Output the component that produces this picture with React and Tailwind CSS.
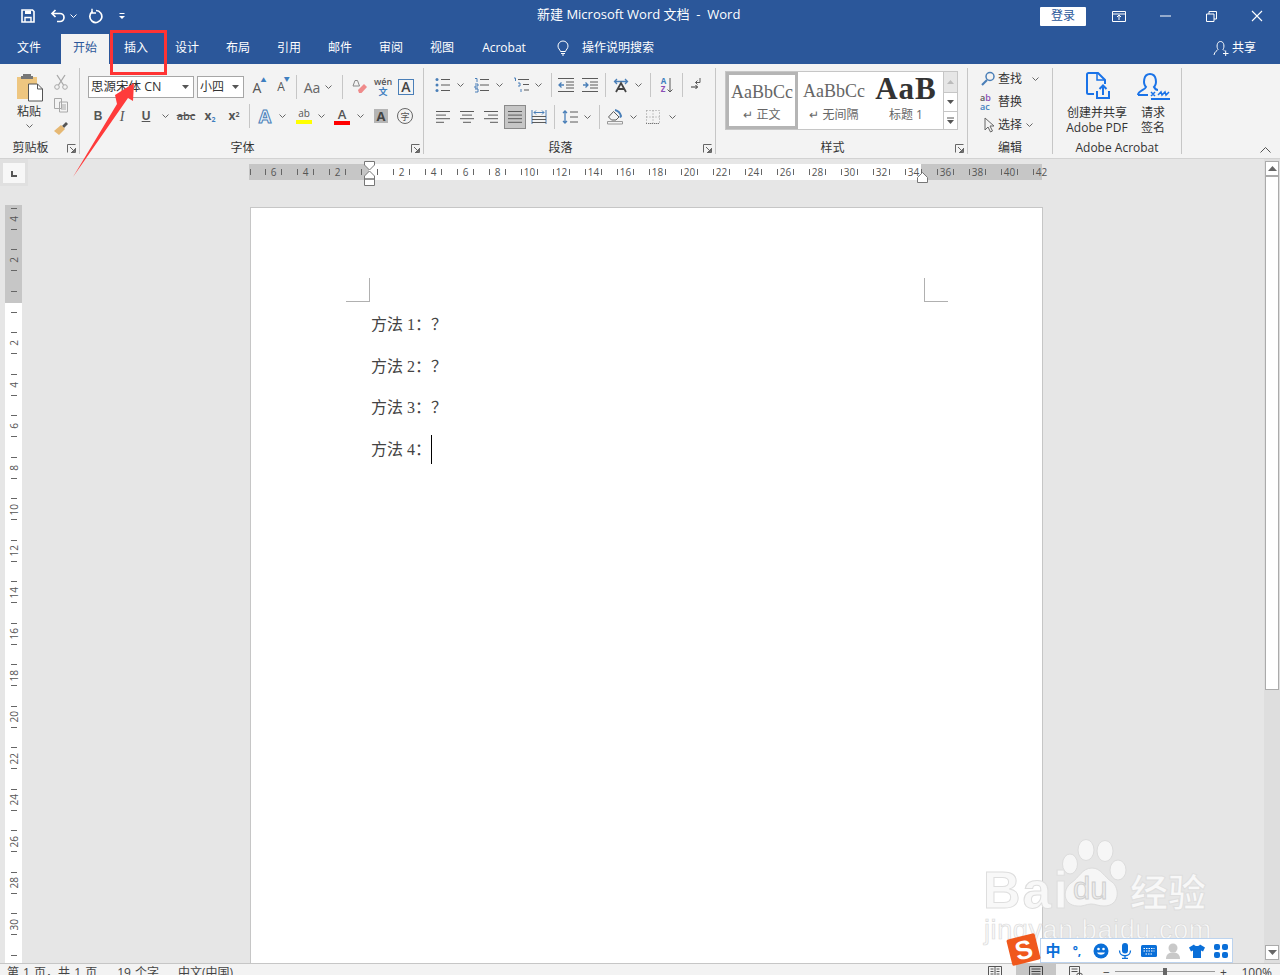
import React from "react";

const S = ({ w = 16, h = 16, className = "", children }) => (
  <svg width={w} height={h} viewBox={`0 0 ${w} ${h}`} fill="none" className={className}>{children}</svg>
);
const G = "#5b5b5b";
const B = "#4a7fb8";
const Chev = ({ c = "#666" }) => <S w={7} h={4}><path d="M.5.5 3.5 3.5 6.5.5" stroke={c} /></S>;
const Cell = ({ className = "w-[24px]", children }) => (
  <span className={`flex h-full shrink-0 items-center justify-center ${className}`}>{children}</span>
);
const Sep = ({ className = "" }) => <span className={`h-[24px] w-px shrink-0 self-center bg-[#c6c6c6] ${className}`} />;
const Launcher = () => (
  <span className="absolute bottom-[1px] right-[3px]">
    <S w={9} h={9}><path d="M.5 8.5v-8h8M8.5 4v4.5H4M3 3l4.5 4.5M7.5 5v2.5H5" stroke="#666" /></S>
  </span>
);
const Group = ({ className, label, launcher, children }) => (
  <div className={`relative mt-[4px] flex h-[86px] shrink-0 flex-col border-r border-[#c6c6c6] ${className}`}>
    <div className="h-[71px]">{children}</div>
    <div className={`flex h-[15px] items-center justify-center pt-[2px] text-[12px] leading-none text-[#333] ${launcher ? "pr-[18px]" : ""}`}>{label}</div>
    {launcher && <Launcher />}
  </div>
);
const Lines = ({ rows }) => (
  <S w={16} h={14}>{rows.map(([x1, x2], i) => <path key={i} d={`M${x1} ${1.5 + i * 3.6}H${x2}`} stroke={G} />)}</S>
);

const tabs = [
  ["文件", "ml-[5px] mr-[8px] w-[48px] text-white"],
  ["开始", "mr-[3px] w-[48px] bg-[#f3f3f3] text-[#2b579a]"],
  ["插入", "mr-[3px] w-[48px] text-white"],
  ["设计", "mr-[3px] w-[48px] text-white"],
  ["布局", "mr-[3px] w-[48px] text-white"],
  ["引用", "mr-[3px] w-[48px] text-white"],
  ["邮件", "mr-[3px] w-[48px] text-white"],
  ["审阅", "mr-[3px] w-[48px] text-white"],
  ["视图", "mr-[3px] w-[48px] text-white"],
  ["Acrobat", "w-[70px] text-white"],
];

const hCells = Array.from({ length: 25 }, (_, k) => (k === 3 ? "" : k < 3 ? String(6 - 2 * k) : String(2 * (k - 3))));
const vCells = Array.from({ length: 19 }, (_, k) => (k === 2 || k === 18 ? "" : k < 2 ? String(4 - 2 * k) : String(2 * (k - 2))));
const lines = ["方法 1：？", "方法 2：？", "方法 3：？"];

function TitleBar() {
  return (
    <div className="relative flex h-[32px] shrink-0 items-center bg-[#2b579a] text-white">
      <Cell className="ml-[20px] w-[16px]">
        <S><path d="M2 2h10.5L14 3.5V14H2z" stroke="#fff" strokeWidth="1.6" /><path d="M5 2.5h6v3.5H5z" fill="#fff" /><path d="M5 14V9.5h6V14" stroke="#fff" strokeWidth="1.4" /></S>
      </Cell>
      <Cell className="ml-[14px] w-[16px]">
        <S><path d="M5.5 2 2 5.5 5.5 9M2.5 5.5H10a3.7 3.7 0 0 1 0 8H7" stroke="#fff" strokeWidth="1.7" /></S>
      </Cell>
      <Cell className="ml-[3px] w-[8px]"><Chev c="#fff" /></Cell>
      <Cell className="ml-[10px] w-[16px]">
        <S><path d="M5.5 3.5a6 6 0 1 0 3.5-1" stroke="#fff" strokeWidth="1.7" /><path d="M5 .8V5h4" stroke="#fff" strokeWidth="1.4" /></S>
      </Cell>
      <Cell className="ml-[15px] w-[8px]">
        <S w={8} h={8}><path d="M1.5 1.5h5" stroke="#fff" /><path d="M1 4h6L4 7z" fill="#fff" /></S>
      </Cell>
      <div className="absolute left-[537px] top-[5px] whitespace-pre text-[13px] leading-[18px]">新建 Microsoft Word 文档  -  Word</div>
      <div className="ml-auto flex h-full items-center">
        <div className="flex h-[19px] w-[46px] items-center justify-center rounded-[1px] bg-white text-[12px] text-[#2b579a]">登录</div>
        <Cell className="ml-[19px] w-[28px]">
          <S w={14} h={11}><path d="M.5.5h13v10H.5zM.5 3h13M7 9V4.5M5 6l2-2 2 2" stroke="#fff" /></S>
        </Cell>
        <Cell className="ml-[18px] w-[28px]"><S w={11} h={2}><path d="M0 1h11" stroke="#fff" /></S></Cell>
        <Cell className="ml-[18px] w-[28px]">
          <S w={11} h={11}><path d="M.5 3h7.5v7.5H.5zM3 3V.5h7.5V8H8" stroke="#fff" /></S>
        </Cell>
        <Cell className="ml-[18px] mr-[9px] w-[28px]">
          <S w={12} h={12}><path d="m1 1 10 10M11 1 1 11" stroke="#fff" strokeWidth="1.1" /></S>
        </Cell>
      </div>
    </div>
  );
}

function TabRow() {
  return (
    <div className="flex h-[32px] shrink-0 items-end bg-[#2b579a] text-[12px]">
      {tabs.map(([t, c]) => (
        <div key={t} className={`flex h-[30px] shrink-0 items-center justify-center pb-[2px] ${c}`}>{t}</div>
      ))}
      <span className="ml-[17px] flex h-[30px] w-[14px] items-center justify-center pb-[2px]">
        <S w={14} h={16}><path d="M4.500 11.500C4 9.500 2 8.700 2 6a5 5 0 0 1 10 0c0 2.700-2 3.500-2.500 5.500zM5 13.500h4M6 15h2" stroke="#fff" /></S>
      </span>
      <span className="ml-[12px] flex h-[30px] items-center pb-[2px] text-white">操作说明搜索</span>
      <span className="ml-auto mr-[24px] flex h-[30px] items-center gap-[3px] pb-[2px] text-white">
        <S><path d="M1 15c.5-3.500 3-4 4-5.500C3.500 7.500 3.500 1.500 7.500 1.500s4 6 2.500 8c.5.700 1 1 1.500 1.300M10 13.500h5.500M12.700 10.500v5.500" stroke="#fff" /></S>
        共享
      </span>
    </div>
  );
}

function Ribbon() {
  return (
    <div className="flex h-[95px] shrink-0 border-b border-[#d2d2d2] bg-[#f3f3f3] text-[#333]">
      <Group className="w-[80px]" label="剪贴板" launcher>
        <div className="flex h-full">
          <div className="ml-[11px] flex w-[36px] flex-col items-center pt-[4px]">
            <S w={30} h={30}>
              <path d="M3 5h20v22H3z" fill="#eec680" /><path d="M9 2h8v5H9z" fill="#777" /><path d="M7 4h12v3H7z" fill="#777" />
              <path d="M14.500 12h9l5 5v12h-14z" fill="#fff" stroke="#555" /><path d="M23.500 12v5h5" stroke="#555" />
            </S>
            <span className="mt-[1px] text-[12px] leading-[18px]">粘贴</span>
            <span className="mt-[3px] leading-none"><Chev /></span>
          </div>
          <div className="ml-[4px] flex w-[20px] flex-col items-center pt-[2px]">
            <Cell className="!h-[23px] w-[20px]">
              <S><path d="m4 1 6.500 10M12 1 5.500 11" stroke="#a8a8a8" strokeWidth="1.300" /><circle cx="4" cy="13" r="2.300" stroke="#a8a8a8" /><circle cx="12" cy="13" r="2.300" stroke="#a8a8a8" /></S>
            </Cell>
            <Cell className="!h-[23px] w-[20px]">
              <S><path d="M1.500 1.500h7v10h-7zM6.500 5h8v10h-8zM8 8h5M8 10h5M8 12h5" stroke="#a8a8a8" /></S>
            </Cell>
            <Cell className="!h-[23px] w-[20px]">
              <S><path d="m9 6 4-4 2 2-4 4z" fill="#555" /><path d="m1 11 7-6 4 4-6 6z" fill="#e6b873" /></S>
            </Cell>
          </div>
        </div>
      </Group>

      <Group className="w-[344px]" label="字体" launcher>
        <div className="mt-[8px] flex h-[22px] items-center pl-[8px]">
          <div className="flex h-[22px] w-[106px] items-center justify-between border border-[#a6a6a6] bg-white pl-[2px] pr-[4px] text-[12.5px] leading-none">
            <span className="text-[#333]">思源宋体 CN</span>
            <S w={7} h={4}><path d="M0 0h7L3.500 4z" fill="#555" /></S>
          </div>
          <div className="ml-[3px] flex h-[22px] w-[47px] items-center justify-between border border-[#a6a6a6] bg-white pl-[2px] pr-[4px] text-[12px] leading-none">
            <span>小四</span>
            <S w={7} h={4}><path d="M0 0h7L3.500 4z" fill="#555" /></S>
          </div>
          <Cell className="ml-[1px] w-[24px]"><span className="relative text-[14px] text-[#555]">A<span className="absolute -right-[5px] -top-[1px] text-[6px] text-[#3f7fc0]">▲</span></span></Cell>
          <Cell className="w-[24px]"><span className="relative text-[12px] text-[#555]">A<span className="absolute -right-[5px] -top-[3px] text-[6px] text-[#3f7fc0]">▼</span></span></Cell>
          <Sep className="ml-[3px]" />
          <Cell className="ml-[4px] w-[22px]"><span className="text-[14px] text-[#666]">Aa</span></Cell>
          <Cell className="w-[10px]"><Chev /></Cell>
          <Sep className="ml-[9px]" />
          <Cell className="ml-[5px] w-[24px]">
            <S><path d="M3 1.500h2.500L7.500 7H1z" stroke="#888" /><path d="m6 11 6-6 3 3-5.500 6H7z" fill="#ef8a8a" /></S>
          </Cell>
          <Cell className="w-[22px]"><span className="flex flex-col items-center text-[9px] font-semibold leading-[10px] text-[#555]">wén<span className="text-[#3f7fc0]">文</span></span></Cell>
          <Cell className="w-[24px]"><span className="flex h-[16px] w-[16px] items-center justify-center border border-[#4a7fb8] text-[14px] font-semibold leading-none text-[#444]">A</span></Cell>
        </div>
        <div className="mt-[6px] flex h-[24px] items-center pl-[6px] text-[#555]">
          <Cell className="w-[24px]"><b className="font-['Liberation_Sans'] text-[12px]">B</b></Cell>
          <Cell className="w-[24px]"><i className="font-['Liberation_Serif'] text-[14px]">I</i></Cell>
          <Cell className="w-[24px]"><b className="font-['Liberation_Sans'] text-[12px] underline">U</b></Cell>
          <Cell className="w-[14px]"><Chev /></Cell>
          <Cell className="ml-[2px] w-[24px]"><span className="text-[11px] font-semibold line-through">abc</span></Cell>
          <Cell className="w-[24px]"><b className="text-[12px]">x<sub className="text-[7px] text-[#3f7fc0]">2</sub></b></Cell>
          <Cell className="w-[24px]"><b className="text-[12px]">x<sup className="text-[7px]">2</sup></b></Cell>
          <Sep className="ml-[3px]" />
          <Cell className="ml-[3px] w-[24px]"><span className="text-[18px] font-bold leading-none text-[#e8f1fa] [-webkit-text-stroke:1px_#4a7fb8]">A</span></Cell>
          <Cell className="w-[10px]"><Chev /></Cell>
          <Cell className="ml-[5px] w-[24px]">
            <span className="flex flex-col items-center"><span className="text-[10px] leading-[11px] text-[#555]">ab</span><span className="mt-[1px] h-[4px] w-[16px] bg-[#ffff00]" /></span>
          </Cell>
          <Cell className="w-[10px]"><Chev /></Cell>
          <Cell className="ml-[4px] w-[24px]">
            <span className="flex flex-col items-center"><span className="text-[13px] font-semibold leading-[12px]">A</span><span className="mt-[1px] h-[4px] w-[16px] bg-[#ff0000]" /></span>
          </Cell>
          <Cell className="ml-[1px] w-[10px]"><Chev /></Cell>
          <Cell className="ml-[4px] w-[24px]"><span className="flex h-[14px] w-[14px] items-center justify-center bg-[#b5b5b5] text-[13px] font-bold leading-none text-[#444]">A</span></Cell>
          <Cell className="w-[24px]"><span className="flex h-[16px] w-[16px] items-center justify-center rounded-full border border-[#666] text-[9px] leading-none">字</span></Cell>
        </div>
      </Group>

      <Group className="w-[292px]" label="段落" launcher>
        <div className="mt-[5px] flex h-[24px] items-center">
          <Cell className="ml-[7px] w-[24px]">
            <S><circle cx="2" cy="2.500" r="1.500" fill={B} /><circle cx="2" cy="8" r="1.500" fill={B} /><circle cx="2" cy="13.500" r="1.500" fill={B} /><path d="M6 2.500h9M6 8h9M6 13.500h9" stroke={G} /></S>
          </Cell>
          <Cell className="w-[10px]"><Chev /></Cell>
          <Cell className="ml-[5px] w-[24px]">
            <S><path d="M1 1.500h2V5M1 7h3v2H1v2h3M1 12h3v3H1" stroke={B} /><path d="M6 2.500h9M6 8h9M6 13.500h9" stroke={G} /></S>
          </Cell>
          <Cell className="w-[10px]"><Chev /></Cell>
          <Cell className="ml-[5px] w-[24px]">
            <S><path d="M1 1h1.500v3M5 6h2v3H5M8 12v3" stroke={B} /><path d="M5 2.500h11M10 7.500h6M11 13h5" stroke={G} /></S>
          </Cell>
          <Cell className="w-[10px]"><Chev /></Cell>
          <Sep className="ml-[8px]" />
          <Cell className="ml-[2px] w-[24px]">
            <S><path d="M0 1.500h16M8 5h8M8 8h8M8 11h8M0 14.500h16" stroke={G} /><path d="M6 8H1M3.500 5.500 1 8l2.500 2.500" stroke={B} strokeWidth="1.300" /></S>
          </Cell>
          <Cell className="w-[24px]">
            <S><path d="M0 1.500h16M8 5h8M8 8h8M8 11h8M0 14.500h16" stroke={G} /><path d="M1 8h5M3.500 5.500 6 8l-2.500 2.500" stroke={B} strokeWidth="1.300" /></S>
          </Cell>
          <Sep className="ml-[3px]" />
          <Cell className="ml-[3px] w-[24px]">
            <S><path d="M2 4.500h12M4 2 1.500 4.500 4 7M12 2l2.500 2.500L12 7" stroke={B} strokeWidth="1.300" /><path d="m3 15 5-9 5 9M5 12h6" stroke="#444" strokeWidth="1.800" /></S>
          </Cell>
          <Cell className="w-[10px]"><Chev /></Cell>
          <Sep className="ml-[7px]" />
          <Cell className="ml-[4px] w-[24px]">
            <span className="flex items-center gap-[1px]"><span className="flex flex-col text-[8px] font-bold leading-[8px]"><span className="text-[#3f7fc0]">A</span><span className="text-[#8a4fb5]">Z</span></span>
            <S w={6} h={15}><path d="M3 0v14M.5 11.500 3 14l2.500-2.500" stroke={G} /></S></span>
          </Cell>
          <Sep className="ml-[3px]" />
          <Cell className="ml-[2px] w-[24px]">
            <S><path d="M11 1v4.500H6.500M8.500 3.500l-2 2 2 2" stroke={G} /><path d="M2 10h6.500M6.500 8l2 2-2 2" stroke="#333" /></S>
          </Cell>
        </div>
        <div className="mt-[8px] flex h-[24px] items-center">
          <Cell className="ml-[7px] w-[24px]"><Lines rows={[[1, 15], [1, 11], [1, 15], [1, 9]]} /></Cell>
          <Cell className="w-[24px]"><Lines rows={[[1, 15], [3, 13], [1, 15], [4, 12]]} /></Cell>
          <Cell className="w-[24px]"><Lines rows={[[1, 15], [5, 15], [1, 15], [7, 15]]} /></Cell>
          <Cell className="ml-[1px] w-[22px] border border-[#8a8a8a] bg-[#c6c6c6]"><Lines rows={[[1, 15], [1, 15], [1, 15], [1, 15]]} /></Cell>
          <Cell className="ml-[1px] w-[24px]">
            <S><path d="M1 1v14M15 1v14M3 3.500h10M5 1.500l-2 2 2 2M11 1.500l2 2-2 2" stroke={B} /><path d="M1 7.500h14M1 10.500h14M1 13.500h14" stroke={G} /></S>
          </Cell>
          <Sep className="ml-[3px]" />
          <Cell className="ml-[3px] w-[24px]">
            <S><path d="M3 2v12M1 4l2-2 2 2M1 12l2 2 2-2" stroke={B} strokeWidth="1.300" /><path d="M8 3h8M8 8h8M8 13h8" stroke={G} /></S>
          </Cell>
          <Cell className="w-[10px]"><Chev /></Cell>
          <Sep className="ml-[7px]" />
          <Cell className="ml-[3px] w-[24px]">
            <S><path d="m1.500 8 5-5.500L12 8 9 11H4.500z" stroke={G} /><path d="M8 1c2 .5 5 2.500 6 6l-1 1.500" stroke={B} strokeWidth="2" /><path d="M.5 12.500h15v2.500H.5z" stroke="#999" /></S>
          </Cell>
          <Cell className="ml-[1px] w-[10px]"><Chev /></Cell>
          <Cell className="ml-[3px] w-[24px]">
            <S><path d="M1.500 1.500h13v13h-13zM8 1.500v13M1.500 8h13" stroke="#999" strokeDasharray="1 2" /><path d="M1 14.500h14" stroke="#777" strokeDasharray="1 1" /></S>
          </Cell>
          <Cell className="ml-[2px] w-[10px]"><Chev /></Cell>
        </div>
      </Group>

      <Group className="w-[252px]" label="样式" launcher>
        <div className="ml-[9px] mt-[3px] flex h-[59px] w-[233px] border border-[#c6c6c6] bg-white">
          <div className="flex w-[72px] flex-col items-center overflow-hidden border-[3px] border-[#b5b5b5] pt-[5px]">
            <span className="font-['Liberation_Serif'] whitespace-nowrap text-[18px] leading-[24px] text-[#666]">AaBbCc</span>
            <span className="mt-[2px] text-[12px] leading-[18px] text-[#666]">↵ 正文</span>
          </div>
          <div className="flex w-[72px] flex-col items-center overflow-hidden pt-[7px]">
            <span className="font-['Liberation_Serif'] whitespace-nowrap text-[18px] leading-[24px] text-[#666]">AaBbCc</span>
            <span className="mt-[3px] whitespace-nowrap text-[12px] leading-[18px] text-[#666]">↵ 无间隔</span>
          </div>
          <div className="flex w-[72px] flex-col items-center overflow-hidden pt-[1px]">
            <span className="font-['Liberation_Serif'] whitespace-nowrap text-[31px] font-bold leading-[31px] tracking-[1px] text-[#333]">AaB</span>
            <span className="mt-[2px] whitespace-nowrap text-[12px] leading-[18px] text-[#666]">标题 1</span>
          </div>
          <div className="ml-auto flex w-[14px] flex-col border-l border-[#c6c6c6]">
            <span className="flex h-[21px] items-center justify-center border-b border-[#c6c6c6] bg-[#e6e6e6]"><S w={7} h={4}><path d="M3.500 0 7 4H0z" fill="#bbb" /></S></span>
            <span className="flex h-[19px] items-center justify-center border-b border-[#c6c6c6]"><S w={7} h={4}><path d="M0 0h7L3.500 4z" fill="#555" /></S></span>
            <span className="flex flex-1 items-center justify-center"><S w={7} h={7}><path d="M0 1h7" stroke="#555" /><path d="M0 3h7L3.500 7z" fill="#555" /></S></span>
          </div>
        </div>
      </Group>

      <Group className="w-[85px]" label="编辑">
        <div className="-mt-[1px] flex flex-col pl-[12px] text-[12px]">
          <div className="flex h-[23px] items-center">
            <S w={16} h={16}><circle cx="10" cy="5.500" r="4" stroke={B} strokeWidth="1.500" /><path d="m7 9-5 5" stroke={B} strokeWidth="2.200" /></S>
            <span className="ml-[2px]">查找</span><span className="ml-[10px] flex"><Chev /></span>
          </div>
          <div className="flex h-[23px] items-center">
            <span className="flex w-[18px] flex-col text-[9px] font-semibold leading-[9px]"><span className="text-[#555]">a<span className="text-[#8a4fb5]">b</span></span><span className="text-[#3f7fc0]">ac</span></span>
            <span>替换</span>
          </div>
          <div className="flex h-[23px] items-center">
            <S w={16} h={16} className="ml-[2px]"><path d="M3 1v12l3-3 2.500 5 2-1-2.500-5h4z" stroke="#666" /></S>
            <span>选择</span><span className="ml-[4px] flex"><Chev /></span>
          </div>
        </div>
      </Group>

      <Group className="w-[129px]" label="Adobe Acrobat">
        <div className="flex pl-[10px] pt-[4px] text-center text-[12px] leading-[15px]">
          <div className="flex w-[68px] flex-col items-center">
            <S w={26} h={30}>
              <path d="M10 22H4.500A1.500 1.500 0 0 1 3 20.500v-18A1.500 1.500 0 0 1 4.500 1H14l7 7v4" stroke="#1a73e8" strokeWidth="2" />
              <path d="M13 1v7h8" stroke="#1a73e8" strokeWidth="1.500" />
              <path d="M13 19v7h12v-7M19 23v-9M15.500 17l3.500-3.500 3.500 3.500" stroke="#1a73e8" strokeWidth="2" />
            </S>
            <span className="mt-[3px] whitespace-nowrap">创建并共享</span>
            <span className="whitespace-nowrap">Adobe PDF</span>
          </div>
          <div className="flex w-[44px] flex-col items-center">
            <S w={34} h={30}>
              <path d="M2 23c0-4 7-5 8-8-3-3-3-13 4-13s7 10 4 13c1 2 3 3 4 3M2 23h10" stroke="#1a73e8" strokeWidth="2" />
              <path d="m15 20 4 4m0-4-4 4M22 23l3-3 1 3 3-3 1 3 3-3" stroke="#1a73e8" strokeWidth="1.500" />
              <path d="M15 27h19" stroke="#1a73e8" strokeWidth="2" />
            </S>
            <span className="mt-[3px]">请求</span>
            <span>签名</span>
          </div>
        </div>
      </Group>

      <div className="flex flex-1 items-end justify-end pb-[5px] pr-[9px]">
        <S w={11} h={6}><path d="m.5 5.500 5-5 5 5" stroke="#555" /></S>
      </div>
    </div>
  );
}

function HRuler() {
  return (
    <div className="relative flex h-[16px] w-[793px] items-center bg-[linear-gradient(to_right,#c6c6c6_120px,#fff_120px,#fff_672px,#c6c6c6_672px)] pl-[1px] text-[10px] leading-none text-[#555]">
      <span className="mr-[6px] h-[6px] w-px shrink-0 bg-[#666]" />
      {hCells.map((n, k) => (
        <div key={k} className="flex w-[32px] shrink-0 items-center">
          <span className="ml-[8px] h-[6px] w-px shrink-0 bg-[#666]" />
          <span className="w-[15px] shrink-0 text-center">{n}</span>
          {k < 24 && <span className="h-[6px] w-px shrink-0 bg-[#666]" />}
        </div>
      ))}
      <span className="absolute -top-[3px] left-[115px]">
        <S w={11} h={27}><path d="M.5.500h10V4L5.500 9 .5 4zM5.500 10l5 5v3H.5v-3zM.5 18h10v6.500H.5z" fill="#fff" stroke="#777" /></S>
      </span>
      <span className="absolute left-[668px] top-[8px]">
        <S w={11} h={11}><path d="M5.500.5l5 5v5H.5v-5z" fill="#fff" stroke="#777" /></S>
      </span>
    </div>
  );
}

function VRuler() {
  return (
    <div className="ml-[5px] mt-[19px] w-[17px] flex-1 overflow-hidden bg-[linear-gradient(to_bottom,#c6c6c6_98px,#fff_98px)] text-[10px] leading-none text-[#555]">
      <div className="-mt-[7px] flex flex-col">
        {vCells.map((n, k) => (
          <div key={k} className="flex h-[41.5px] shrink-0 flex-col items-center justify-center">
            <span className="h-px w-[6px] shrink-0 bg-[#666]" />
            <span className="flex h-[20px] w-full items-center justify-center"><span className="rotate-180 [writing-mode:vertical-rl]">{n}</span></span>
            <span className="h-px w-[6px] shrink-0 bg-[#666]" />
          </div>
        ))}
      </div>
    </div>
  );
}

function Page() {
  const t = "font-['Liberation_Serif','Noto_Sans_CJK_SC',serif] text-[16px] leading-[41.6px] text-[#444]";
  return (
    <div className="ml-[1px] mt-[27px] w-[793px] flex-1 border-x border-t border-[#c6c6c6] bg-white pt-[70px]">
      <div className="ml-[95px] mr-[94px] flex justify-between">
        <span className="h-[24px] w-[24px] border-b border-r border-[#b0b0b0]" />
        <span className="h-[24px] w-[24px] border-b border-l border-[#b0b0b0]" />
      </div>
      <div className={`pl-[120px] pt-[2px] ${t}`}>
        {lines.map((l) => <div key={l}>{l}</div>)}
        <div className="flex items-center">方法 4：<span className="h-[29px] w-px bg-black" /></div>
      </div>
    </div>
  );
}

function Scrollbar() {
  const Btn = ({ up }) => (
    <span className="flex h-[15px] w-[14px] shrink-0 items-center justify-center border border-[#ababab] bg-white">
      <S w={9} h={5}><path d={up ? "M4.500 0 9 5H0z" : "M0 0h9L4.500 5z"} fill="#666" /></S>
    </span>
  );
  return (
    <div className="flex w-[16px] shrink-0 flex-col items-center bg-[#dedede] pb-[3px] pt-[2px]">
      <Btn up />
      <span className="h-[514px] w-[14px] shrink-0 border border-[#ababab] bg-white" />
      <span className="flex-1" />
      <Btn />
    </div>
  );
}

function StatusBar() {
  return (
    <div className="flex h-[22px] shrink-0 items-start border-t border-[#c6c6c6] bg-[#f3f3f3] text-[12px] leading-[16px] text-[#444]">
      <span className="ml-[7px] mt-[1px] [word-spacing:1px]">第 1 页，共 1 页</span>
      <span className="ml-[20px] mt-[1px] [word-spacing:1px]">19 个字</span>
      <span className="ml-[19px] mt-[1px]">中文(中国)</span>
      <div className="ml-auto flex h-full">
        <Cell className="w-[16px]"><S w={14} h={14} className="mb-[6px]"><path d="M.5 1.500h13v12H.5zM7 1.500v12M2.500 4h3M2.500 6.500h3M2.500 9h3M8.500 4h3M8.500 6.500h3M8.500 9h3" stroke="#555" /></S></Cell>
        <Cell className="ml-[13px] w-[40px] bg-[#c6c6c6]"><S w={14} h={14} className="mb-[6px]"><path d="M.5 1.500h13v12H.5zM2.500 4h9M2.500 6.500h9M2.500 9h9" stroke="#444" /></S></Cell>
        <Cell className="ml-[12px] w-[16px]"><S w={14} h={14} className="mb-[6px]"><path d="M.5 1.500h10v12H.5zM2.500 4h6M2.500 6.500h6" stroke="#555" /><circle cx="10.500" cy="11" r="3" stroke="#555" /></S></Cell>
        <span className="ml-[17px] mt-[1px] w-[10px] text-center">−</span>
        <span className="relative ml-[4px] mt-[7px] h-px w-[100px] bg-[#999]"><span className="absolute -top-[3px] left-[48px] h-[10px] w-[4px] bg-[#666]" /></span>
        <span className="ml-[3px] mt-[1px] w-[10px] text-center">+</span>
        <span className="ml-[13px] mr-[8px] mt-[1px]">100%</span>
      </div>
    </div>
  );
}

function Overlays() {
  const wm = "text-[#f8f8f8] [-webkit-text-stroke:1px_#dedede]";
  return (
    <>
      <div className="absolute left-[110px] top-[30px] h-[45px] w-[57px] border-[3px] border-[#ff3333]" />
      <svg className="absolute left-[60px] top-[80px]" width="90" height="100" viewBox="60 80 90 100">
        <path d="M73 177 117 104 115 95 134 83 133 101 128 98Z" fill="#ff3b3b" />
      </svg>
      <div className={`pointer-events-none absolute left-[983px] top-[860px] select-none whitespace-nowrap font-['Liberation_Sans'] text-[52px] font-bold leading-[60px] tracking-[2px] ${wm}`}>Bai</div>
      <svg className="absolute left-[1060px] top-[838px]" width="68" height="74" viewBox="0 0 68 74">
        <g fill="#f6f6f6" stroke="#dcdcdc">
          <ellipse cx="10" cy="26" rx="7.500" ry="10" />
          <ellipse cx="26" cy="12" rx="8" ry="10.500" />
          <ellipse cx="45" cy="13" rx="8" ry="10.500" />
          <ellipse cx="58" cy="32" rx="8" ry="10" />
          <path d="M32 30c9 0 12 9 20 14 8 6 8 24-8 24-6 0-8-2-13-2s-8 3-14 2C3 67 2 52 11 45c8-5 11-15 21-15z" />
        </g>
      </svg>
      <div className="absolute left-[1073px] top-[872px] font-['Liberation_Sans'] text-[31px] leading-[34px] text-[#ededed] [-webkit-text-stroke:1px_#cfcfcf]">du</div>
      <div className={`absolute left-[1130px] top-[868px] text-[38px] font-bold leading-[46px] ${wm}`}>经验</div>
      <div className="absolute left-[984px] top-[914px] whitespace-nowrap font-['Liberation_Sans'] text-[27px] leading-[32px] tracking-[0.6px] text-[#f8f8f8] [-webkit-text-stroke:0.6px_#d8d8d8]">jingyan.baidu.com</div>

      <div className="absolute left-[1040px] top-[938px] flex h-[25px] w-[193px] items-center border border-[#bcd3ee] bg-white pl-[4px] text-[#0a6fd8]">
        <Cell className="w-[16px] text-[15px] font-bold">中</Cell>
        <Cell className="ml-[8px] w-[16px] text-[12px] font-bold">°,</Cell>
        <Cell className="ml-[8px] w-[16px]"><S><circle cx="8" cy="8" r="7.500" fill="#0a6fd8" /><circle cx="5.500" cy="6" r="1.300" fill="#fff" /><circle cx="10.500" cy="6" r="1.300" fill="#fff" /><path d="M4 9.500c1.500 3 6.500 3 8 0z" fill="#fff" /></S></Cell>
        <Cell className="ml-[8px] w-[16px]"><S><rect x="5" y="0" width="6" height="10.500" rx="3" fill="#0a6fd8" /><path d="M2.500 7.500c0 7 11 7 11 0M8 13.500V16M5 15.500h6" stroke="#0a6fd8" strokeWidth="1.300" /></S></Cell>
        <Cell className="ml-[8px] w-[16px]"><S><rect y="2" width="16" height="12" rx="1.500" fill="#0a6fd8" /><path d="M2.500 5.500h11M2.500 8h11M4.500 11h7" stroke="#fff" strokeDasharray="1.500 1" /></S></Cell>
        <Cell className="ml-[8px] w-[16px]"><S><circle cx="8" cy="5" r="4.500" fill="#c9c9c9" /><path d="M1 16c0-5 3-6.500 7-6.500s7 1.500 7 6.500z" fill="#c9c9c9" /></S></Cell>
        <Cell className="ml-[8px] w-[16px]"><S><path d="M5 1.500 0 4.500l2 4 2-1V15h8V7.500l2 1 2-4-5-3c-1 2-5 2-6 0z" fill="#0a6fd8" /></S></Cell>
        <Cell className="ml-[8px] w-[16px]"><S><rect x="1" y="1" width="6" height="6" rx="2" fill="#0a6fd8" /><rect x="9" y="1" width="6" height="6" rx="2" fill="#0a6fd8" /><rect x="1" y="9" width="6" height="6" rx="2" fill="#0a6fd8" /><rect x="9" y="9" width="6" height="6" rx="2" fill="#0a6fd8" /></S></Cell>
      </div>
      <div className="absolute left-[1009px] top-[936px] flex h-[27px] w-[29px] -rotate-[14deg] items-center justify-center rounded-[2px] bg-[#f0581c] font-['Liberation_Sans'] text-[26px] font-bold leading-none text-white">S</div>
    </>
  );
}

export default function App() {
  return (
    <div className="relative flex h-[975px] w-[1280px] flex-col overflow-hidden font-['Open_Sans','Noto_Sans_CJK_SC',sans-serif]">
      <TitleBar />
      <TabRow />
      <Ribbon />
      <div className="flex h-[804px] shrink-0 bg-[#e6e6e6]">
        <div className="flex w-[249px] shrink-0 flex-col">
          <div className="flex h-[27px] w-[28px] items-center justify-center bg-[#e0e0e0]">
            <span className="flex h-[20px] w-[22px] items-center justify-center bg-[#f7f7f7]"><span className="mt-[3px] h-[6px] w-[6px] border-b-2 border-l-2 border-[#555]" /></span>
          </div>
          <VRuler />
        </div>
        <div className="flex w-[794px] shrink-0 flex-col pt-[5px]">
          <HRuler />
          <Page />
        </div>
        <div className="flex-1" />
        <Scrollbar />
      </div>
      <StatusBar />
      <Overlays />
    </div>
  );
}
